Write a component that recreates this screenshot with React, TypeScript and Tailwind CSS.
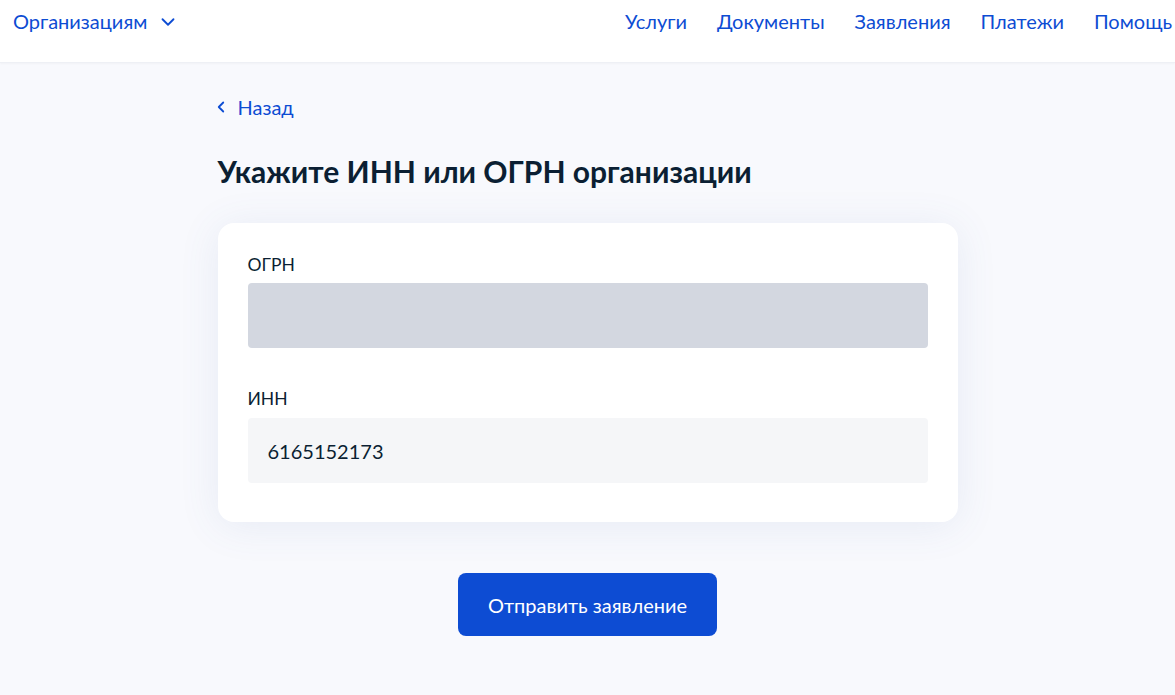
import { ChevronDown, ChevronLeft } from "lucide-react";

const navItems = ["Услуги", "Документы", "Заявления", "Платежи", "Помощь"];

export default function App() {
  return (
    <div className="min-h-[695px] bg-[#f8f9fd] font-['Lato','Noto_Sans',sans-serif] text-[#0b1f33]">
      <header className="h-[63px] bg-white shadow-[0_1px_2px_rgba(0,0,0,0.03)] border-b border-[#eef0f5]">
        <div className="flex items-center justify-between pl-[13px] pr-[3px] pt-[7px] whitespace-nowrap overflow-hidden">
          <button className="flex items-center gap-[10px] text-[20px] leading-[28px] text-[#0d4cd3]">
            Организациям
            <ChevronDown size={22} strokeWidth={2} className="mt-[1px]" />
          </button>
          <nav className="flex gap-[30px] text-[20px] leading-[28px] text-[#0d4cd3]">
            {navItems.map((n) => (
              <a key={n} href="#">
                {n}
              </a>
            ))}
          </nav>
        </div>
      </header>

      <main className="mx-auto w-[740px] pt-[30px]">
        <a href="#" className="flex items-center gap-[8px] text-[20px] leading-[28px] text-[#0d4cd3]">
          <ChevronLeft size={18} strokeWidth={2.4} className="-ml-[6px]" />
          Назад
        </a>

        <h1 className="mt-[32px] text-[30px] leading-[36px] font-bold">
          Укажите ИНН или ОГРН организации
        </h1>

        <div className="mt-[34px] rounded-[16px] bg-white px-[30px] pt-[30px] pb-[39px] shadow-[0_4px_40px_rgba(80,110,170,0.10)]">
          <div>
            <label className="block text-[17.5px] leading-[24px]">ОГРН</label>
            <div className="mt-[6px] h-[65px] rounded-[4px] bg-[#d3d7e0]" />
          </div>
          <div className="mt-[39px]">
            <label className="block text-[17.5px] leading-[24px]">ИНН</label>
            <div className="mt-[7px] flex h-[65px] items-center rounded-[4px] bg-[#f5f6f8] px-[20px] text-[20px]">
              6165152173
            </div>
          </div>
        </div>

        <div className="mt-[51px] flex justify-center">
          <button className="h-[63px] w-[259px] rounded-[8px] bg-[#0d4cd3] text-[20px] text-white">
            Отправить заявление
          </button>
        </div>
      </main>
    </div>
  );
}
